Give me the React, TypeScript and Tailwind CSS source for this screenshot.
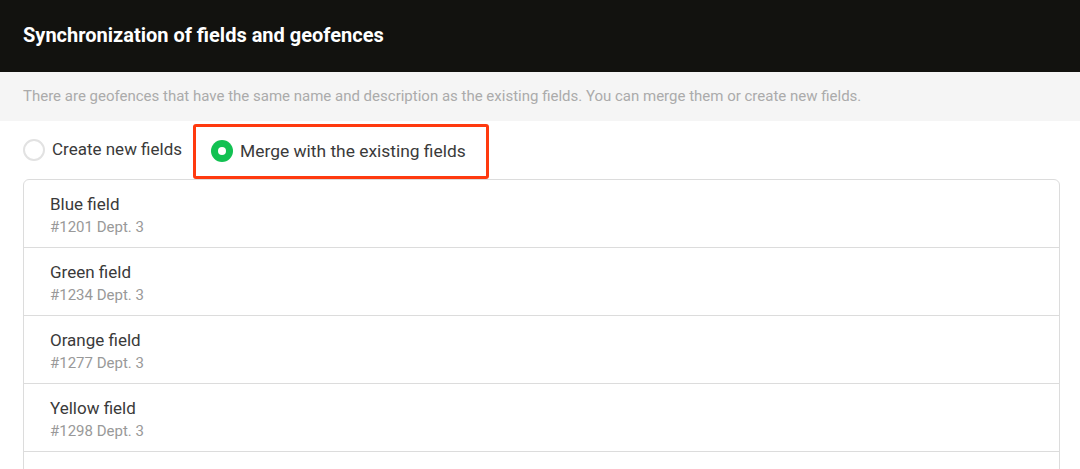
import React from "react";

interface FieldItem {
  name: string;
  code: string;
}

const fields: FieldItem[] = [
  { name: "Blue field", code: "#1201 Dept. 3" },
  { name: "Green field", code: "#1234 Dept. 3" },
  { name: "Orange field", code: "#1277 Dept. 3" },
  { name: "Yellow field", code: "#1298 Dept. 3" },
];

function Radio({ checked }: { checked: boolean }) {
  if (checked) {
    return (
      <span className="w-[22px] h-[22px] rounded-full bg-[#12c152] flex items-center justify-center shrink-0">
        <span className="w-[8px] h-[8px] rounded-full bg-white" />
      </span>
    );
  }
  return (
    <span className="w-[22px] h-[22px] rounded-full border-2 border-[#e2e2e2] bg-white shrink-0" />
  );
}

export default function App() {
  return (
    <div className="w-full h-[469px] overflow-hidden bg-white font-['Roboto',sans-serif]">
      <div className="h-[72px] bg-[#12120f] flex items-center px-[23px] pb-[3px]">
        <h1 className="text-[20px] font-bold text-white">
          Synchronization of fields and geofences
        </h1>
      </div>

      <div className="h-[49px] bg-[#f5f5f5] flex items-center px-[23px]">
        <p className="text-[15px] text-[#ababab]">
          There are geofences that have the same name and description as the
          existing fields. You can merge them or create new fields.
        </p>
      </div>

      <div className="pl-[23px] pr-[20px]">
        <div className="flex h-[58px] items-center">
          <label className="flex items-center gap-[7px]">
            <Radio checked={false} />
            <span className="text-[17px] text-[#3a3a3a]">Create new fields</span>
          </label>
          <div className="ml-[11px] self-end h-[55px] w-[296px] border-[3px] border-[#ff3a0f] rounded-[3px] flex items-center pl-[15px]">
            <label className="flex items-center gap-[7px]">
              <Radio checked={true} />
              <span className="text-[17.4px] text-[#3a3a3a]">
                Merge with the existing fields
              </span>
            </label>
          </div>
        </div>

        <div className="border border-[#dcdcdc] rounded-[6px]">
          {fields.map((f) => (
            <div
              key={f.code}
              className="h-[68px] border-b border-[#dcdcdc] pl-[26px] pt-[12px]"
            >
              <div className="text-[17px] leading-[24px] text-[#3a3a3a]">
                {f.name}
              </div>
              <div className="mt-[1px] text-[15px] leading-[20px] text-[#999]">
                {f.code}
              </div>
            </div>
          ))}
          <div className="h-[68px]" />
        </div>
      </div>
    </div>
  );
}
